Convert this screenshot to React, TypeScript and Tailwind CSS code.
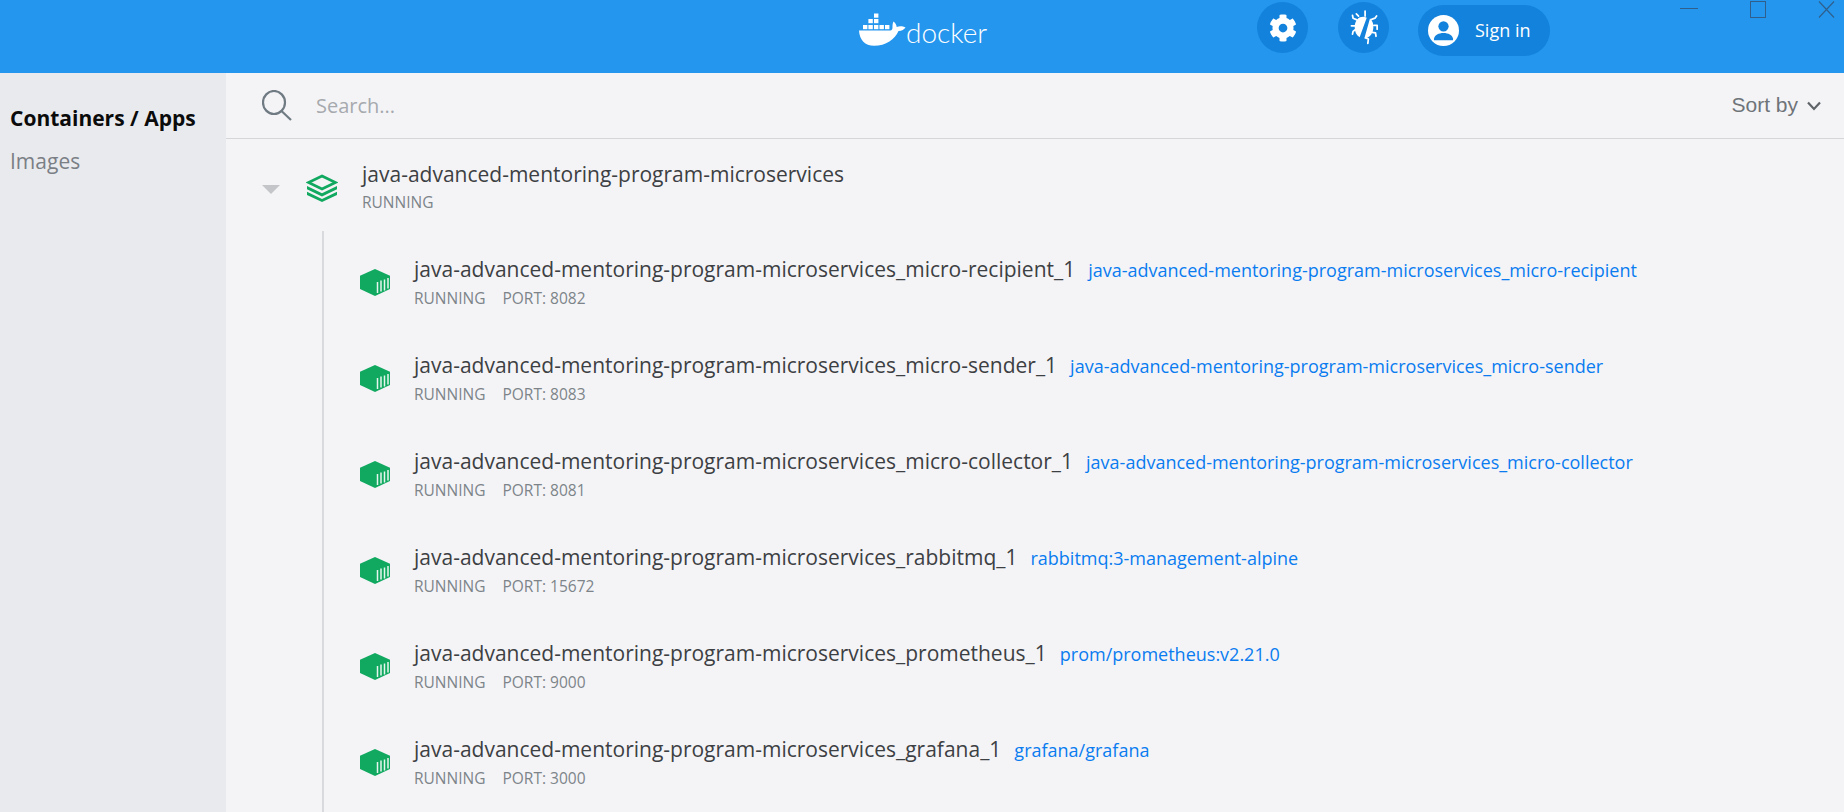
import React from "react";
import { FaCog } from "react-icons/fa";

const rows = [
  ["java-advanced-mentoring-program-microservices_micro-recipient_1", "java-advanced-mentoring-program-microservices_micro-recipient", "8082"],
  ["java-advanced-mentoring-program-microservices_micro-sender_1", "java-advanced-mentoring-program-microservices_micro-sender", "8083"],
  ["java-advanced-mentoring-program-microservices_micro-collector_1", "java-advanced-mentoring-program-microservices_micro-collector", "8081"],
  ["java-advanced-mentoring-program-microservices_rabbitmq_1", "rabbitmq:3-management-alpine", "15672"],
  ["java-advanced-mentoring-program-microservices_prometheus_1", "prom/prometheus:v2.21.0", "9000"],
  ["java-advanced-mentoring-program-microservices_grafana_1", "grafana/grafana", "3000"],
];

function Whale() {
  return (
    <svg width="48" height="34" viewBox="0 0 48 34" fill="#fff">
      <rect x="15" y="0.5" width="4.4" height="4.2" />
      <rect x="9.4" y="6" width="4.4" height="4.2" />
      <rect x="15" y="6" width="4.4" height="4.2" />
      <rect x="4" y="12" width="4.4" height="4.2" />
      <rect x="9.4" y="12" width="4.4" height="4.2" />
      <rect x="15" y="12" width="4.4" height="4.2" />
      <rect x="20.5" y="12" width="4.4" height="4.2" />
      <rect x="26" y="12" width="4.4" height="4.2" />
      <path d="M0 17.5h31.5c1-.1 2-1.2 2-3 0-2 .1-4.500 1-6 1.500 1 3 3.100 3.200 5.500 1.800-.8 4-1 6.300-.5 1 .2 2 .5 2.500 1-1.200 2-3.700 3.400-7 3.400C36 26 27 32.800 15 32.800 6 32.800.6 27 0 17.500z" />
    </svg>
  );
}

function Bug() {
  return (
    <svg width="30" height="35" viewBox="0 0 26 32" fill="none">
      <g stroke="#fff" strokeWidth="1.6" strokeLinecap="round" strokeLinejoin="round">
        <path d="M14 1v4.500M8 5.500 6 3.500M6.500 9 3 7.500 2.500 5M4.500 14.500 1.500 14.500M5 18l-2 1.500-.5 2.500M20 8.500l3-1 1.500-2M22 14h3v3.500M20.500 20.500l3 .5.500 3M14.500 25.500l2.500 1-.5 4" />
      </g>
      <path d="M7 8.500C9 6 13 5.700 15.500 7L9 25C6 23 4.500 20 4.500 15.500 4.500 12.500 5.500 10.300 7 8.500z" fill="#fff" />
      <path d="M18.500 7.500C21 10 22 13.500 21.500 17 21 21 19 24.500 15.500 25.500L13.300 26z" fill="#fff" />
    </svg>
  );
}

function User() {
  return (
    <svg width="31" height="31" viewBox="0 0 26 26">
      <circle cx="13" cy="13" r="13" fill="#fff" />
      <circle cx="13" cy="9.500" r="4.300" fill="#1282dc" />
      <path d="M5 20c.5-3 4-4.800 8-4.800s7.500 1.800 8 4.800v1.200H5z" fill="#1282dc" />
    </svg>
  );
}

function Stack() {
  return (
    <svg width="32" height="28" viewBox="0 0 32 28" fill="none">
      <path d="M16 2 29.500 8.500 16 15 2.500 8.500z" stroke="#11a860" strokeWidth="2.800" strokeLinejoin="miter" />
      <path d="M1 12v3.200l15 7.200 15-7.200V12l-15 7.200z" fill="#11a860" />
      <path d="M1 17.800V21l15 7 15-7v-3.200l-15 7.200z" fill="#11a860" />
    </svg>
  );
}

function Box() {
  return (
    <svg width="30" height="27" viewBox="0 0 30 27">
      <path d="M15 0 30 6.800V20L15 27 0 20V6.800z" fill="#11a860" />
      <g stroke="#e6f6ee" strokeWidth="1.500">
        <path d="M17.500 13v11M21 11.500v11M24.500 10.500v11M28 9v10.500" />
      </g>
    </svg>
  );
}

function Search() {
  return (
    <svg width="30" height="31" viewBox="0 0 30 31" fill="none" stroke="#6f7a82" strokeWidth="2.200">
      <ellipse cx="12" cy="12.500" rx="11" ry="11.500" />
      <path d="M19.500 21 29 30" />
    </svg>
  );
}

export default function App() {
  return (
    <div className="h-[812px] w-[1844px] overflow-hidden flex flex-col bg-[#f4f4f7] font-['Open_Sans',sans-serif]">
      <header className="relative h-[73px] shrink-0 bg-[#2496ee] flex items-start">
        <div className="flex items-end ml-[859px] mt-[13px] w-[398px] gap-[-1px]">
          <Whale />
          <span className="ml-[-1px] font-['Lato',sans-serif] font-light text-[28px] leading-[30px] text-white">docker</span>
        </div>
        <button className="w-[51px] h-[51px] mt-[2px] rounded-full bg-[#1282dc] flex items-center justify-center">
          <FaCog className="w-[28px] h-[28px] text-white" />
        </button>
        <button className="w-[51px] h-[51px] mt-[2px] ml-[30px] rounded-full bg-[#1282dc] flex items-center justify-center">
          <Bug />
        </button>
        <button className="w-[132px] h-[51px] mt-[5px] ml-[29px] rounded-full bg-[#1282dc] flex items-center pl-[10px] gap-[16px]">
          <User />
          <span className="text-[18px] text-white">Sign in</span>
        </button>
        <div className="absolute top-0 left-0 w-full h-[20px] pointer-events-none">
          <div className="absolute left-[1680px] top-[8px] w-[18px] h-[1px] bg-[#2f5f8a]" />
          <div className="absolute left-[1750px] top-[1px] w-[16px] h-[17px] border-[1.500px] border-[#2f5f8a]" />
          <svg className="absolute left-[1818px] top-[1px]" width="17" height="17" viewBox="0 0 17 17" stroke="#2f5f8a" strokeWidth="1.100">
            <path d="M1 0.500 16 16.500M16 0.500 1 16.500" />
          </svg>
        </div>
      </header>
      <div className="flex flex-1 min-h-0">
        <aside className="w-[226px] shrink-0 bg-[#e9eaee] pl-[10px] pt-[31px]">
          <div className="text-[21px] leading-[28px] font-bold text-[#0b0b0b]">Containers / Apps</div>
          <div className="text-[21px] leading-[28px] mt-[15px] text-[#7a7f85]">Images</div>
        </aside>
        <main className="flex-1 min-w-0 flex flex-col">
          <div className="h-[66px] shrink-0 border-b border-[#d5d6d9] flex items-center pl-[36px] pr-[23px]">
            <Search />
            <span className="ml-[24px] text-[20px] text-[#a6a9ad] flex-1">Search...</span>
            <span className="font-['Liberation_Sans',sans-serif] text-[21px] leading-[28px] mb-[2px] text-[#6f7479]">Sort by</span>
            <svg className="ml-[9px]" width="14" height="10" viewBox="0 0 14 10" fill="none" stroke="#5f6469" strokeWidth="2.200"><path d="M1 1.500 7 8l6-6.500" /></svg>
          </div>
          <div className="flex h-[92px] shrink-0">
            <div className="w-[36px] ml-[36px] flex">
              <div className="mt-[46px] w-0 h-0 border-x-[9px] border-x-transparent border-t-[9px] border-t-[#c4c5c8]" />
            </div>
            <div className="mt-[35px] ml-[8px]"><Stack /></div>
            <div className="ml-[24px] pt-[20px]">
              <div className="text-[21px] leading-[30px] text-[#3d4043]">java-advanced-mentoring-program-microservices</div>
              <div className="text-[15.5px] leading-[18px] mt-[4px] text-[#7d8489]">RUNNING</div>
            </div>
          </div>
          <div className="ml-[96px] border-l-2 border-[#d9dadd] flex-1 pt-[10px]">
            {rows.map(([name, image, port]) => (
              <div key={port} className="h-[96px] flex shrink-0">
                <div className="ml-[36px] mt-[28px]"><Box /></div>
                <div className="ml-[24px] pt-[13px]">
                  <div className="flex items-baseline">
                    <span className="text-[21px] leading-[30px] text-[#3d4043]">{name}</span>
                    <span className="ml-[13px] text-[18px] text-[#0a7cf0]">{image}</span>
                  </div>
                  <div className="flex text-[15.5px] leading-[18px] mt-[5px] text-[#7d8489]">
                    <span>RUNNING</span>
                    <span className="ml-[17px]">PORT: {port}</span>
                  </div>
                </div>
              </div>
            ))}
          </div>
        </main>
      </div>
    </div>
  );
}
